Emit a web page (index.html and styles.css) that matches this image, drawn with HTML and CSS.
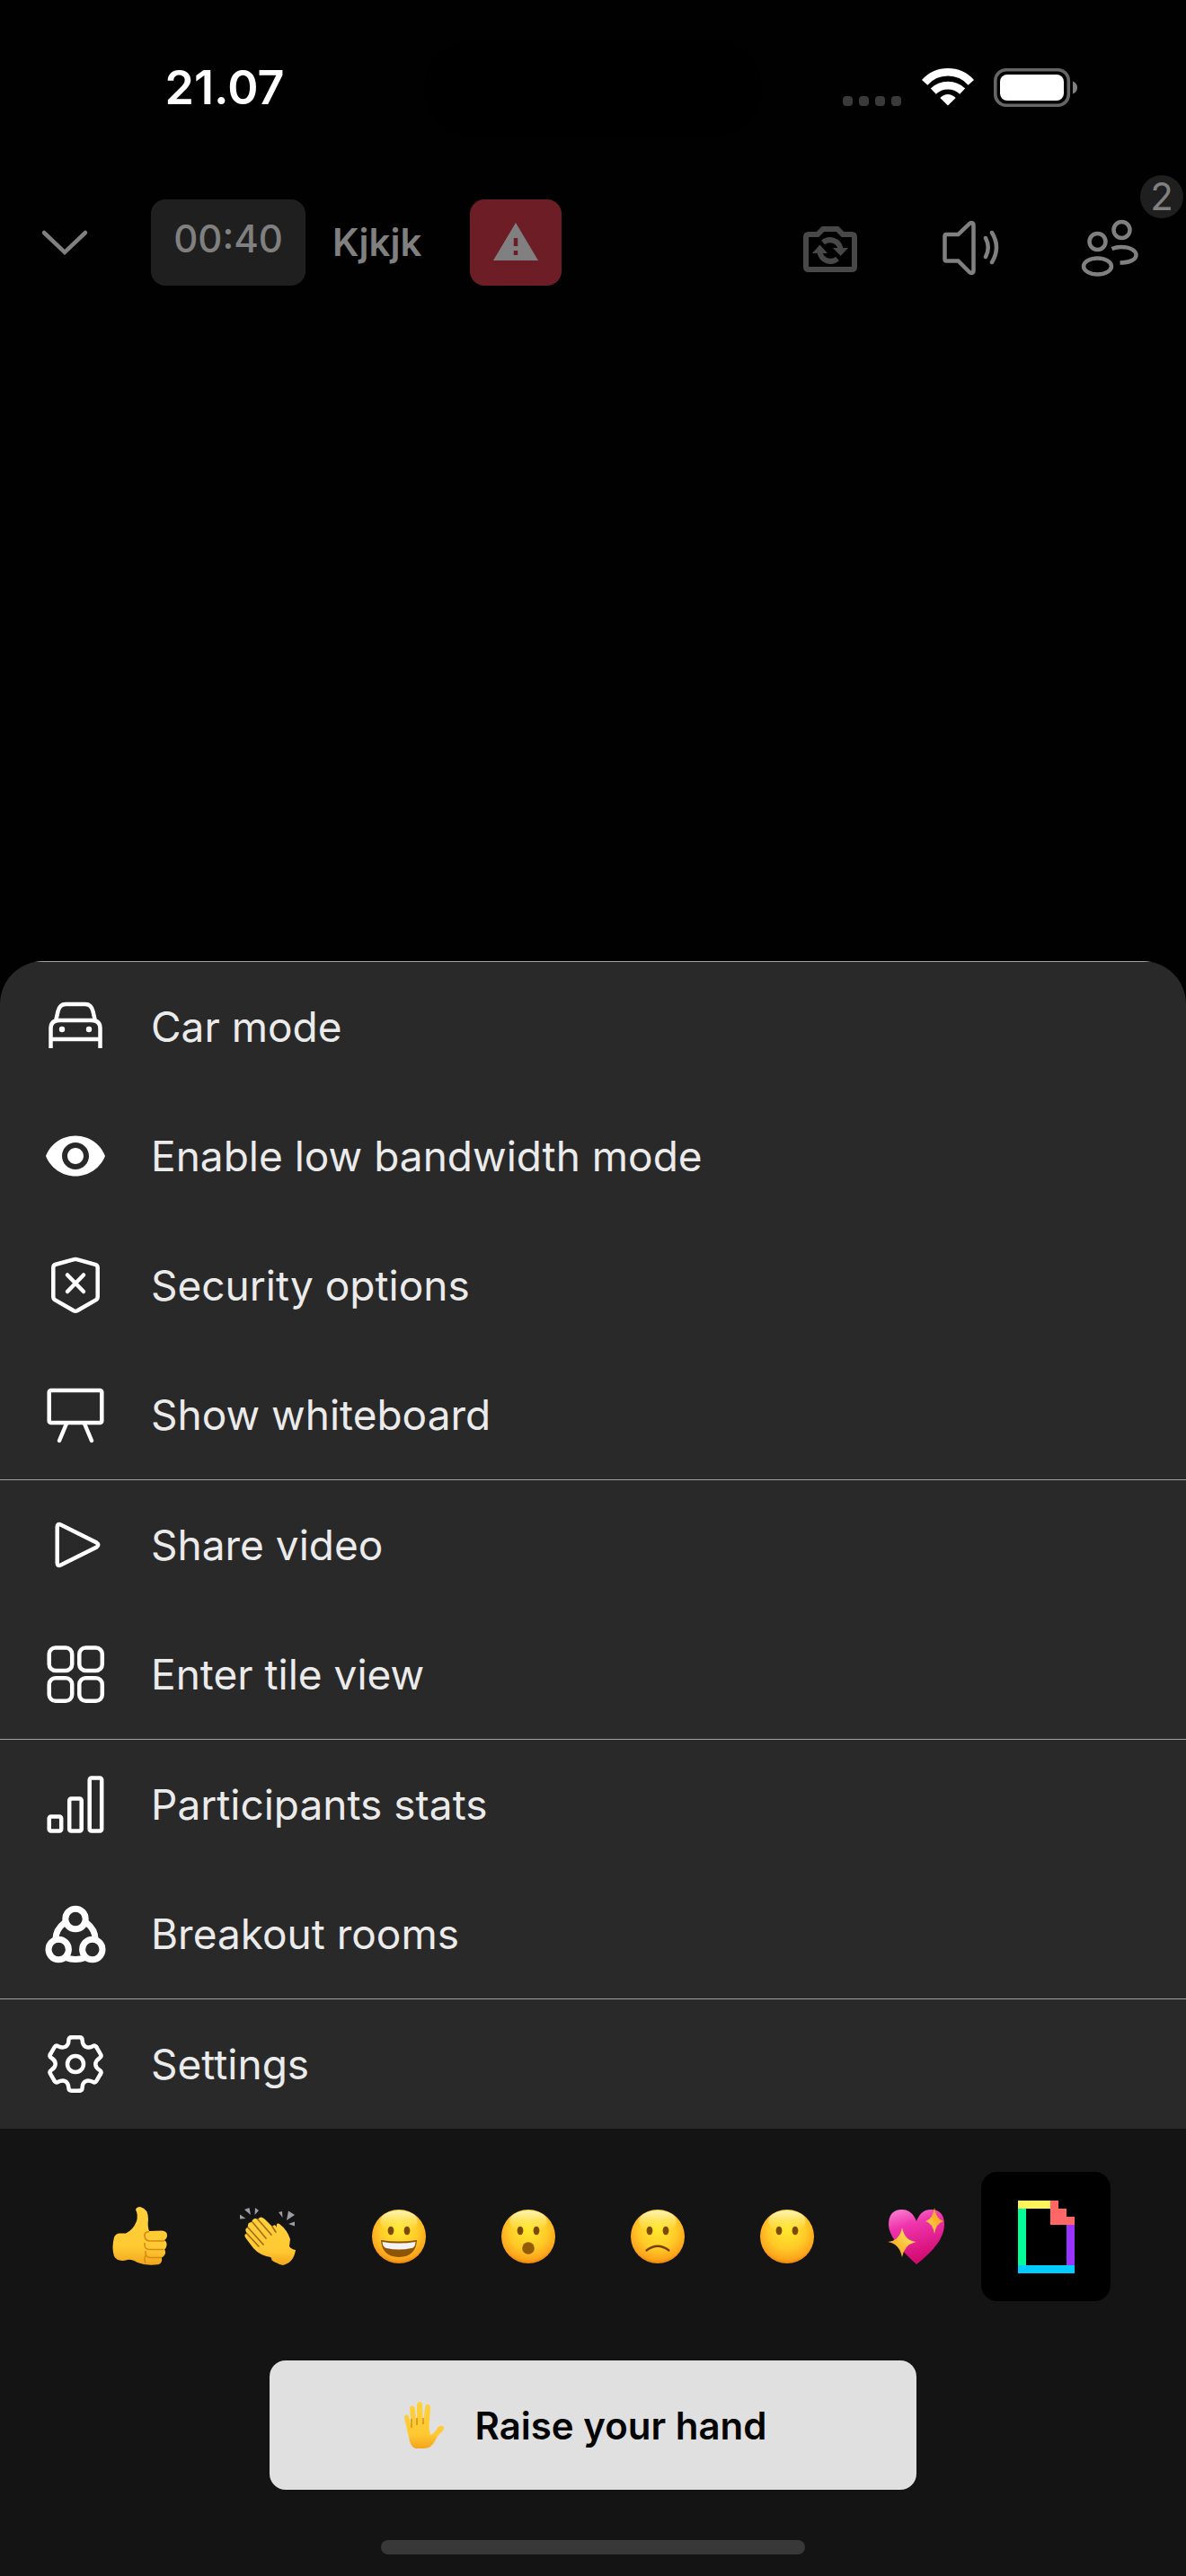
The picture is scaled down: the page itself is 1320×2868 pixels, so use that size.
FILE: index.html
```html
<!DOCTYPE html>
<html lang="en">
<head>
    <meta charset="UTF-8">
    <meta name="viewport" content="width=device-width, initial-scale=1.0">
    <title>Kjkjk</title>
    <link rel="stylesheet" href="styles.css">
</head>
<body>
    <!-- Status bar -->
    <div class="status-bar">
        <div class="status-time">21.07</div>
        <div class="island"></div>
        <div class="status-icons">
            <svg class="signal" width="66" height="42" viewBox="0 0 66 42" fill="#3a3a3a">
                <rect x="0" y="31" width="11" height="11" rx="4"/>
                <rect x="18" y="31" width="11" height="11" rx="4"/>
                <rect x="36" y="31" width="11" height="11" rx="4"/>
                <rect x="54" y="31" width="11" height="11" rx="4"/>
            </svg>
            <svg width="58" height="42" viewBox="0 0 58 42" fill="none" stroke="#fff" stroke-width="8.6">
                <path d="M3.2 15.8A34.7 34.7 0 0 1 54.8 15.8"/>
                <path d="M12.8 25.6A23.5 23.5 0 0 1 45.2 25.6"/>
                <path d="M20.3 33Q29 25 37.7 33L29 41.5Z" fill="#fff" stroke="none"/>
            </svg>
            <svg width="94" height="44" viewBox="0 0 94 44">
                <rect x="1.8" y="1.8" width="81.5" height="39.5" rx="12" fill="none" stroke="#666" stroke-width="3.6"/>
                <rect x="7" y="7" width="71" height="29" rx="8" fill="#fff"/>
                <path d="M88 14.5q5 2 5 7t-5 7Z" fill="#808080"/>
            </svg>
        </div>
    </div>

    <header class="call-header">
        <button class="icon-button" aria-label="Minimize">
            <svg class="icon" viewBox="0 0 72 72"><path d="M13 25 36 47 59 25" stroke-linecap="round"/></svg>
        </button>
        <div class="timer">00:40</div>
        <h1 class="room-name">Kjkjk</h1>
        <button class="alert" aria-label="Security warning">
            <svg class="icon" viewBox="0 0 72 72">
                <path d="M36 14 61 56H11Z" fill="#808080" stroke="none"/>
                <path d="M36 31V40M36 45V50" stroke="#6c1d25"/>
            </svg>
        </button>
        <div class="header-actions">
            <button class="icon-button dim" aria-label="Switch camera">
                <svg class="icon" viewBox="0 0 72 72">
                    <path d="M12 20H22L28 14H44L50 20H60Q63 20 63 23V56Q63 59 60 59H12Q9 59 9 56V23Q9 20 12 20Z" stroke-width="6"/>
                    <path d="M28 29A12 12 0 0 1 47.5 36M44 47A12 12 0 0 1 24.5 40" stroke-width="6"/>
                    <path d="M39 35H56L47.5 44ZM16 41H33L24.5 31.5Z" fill="currentColor" stroke="none"/>
                </svg>
            </button>
            <button class="icon-button" aria-label="Audio output">
                <svg class="icon" viewBox="0 0 72 72" stroke-linecap="round">
                    <path d="M9.5 20H22.5L35 8Q39.5 5.5 39.5 10V60Q39.5 64.5 35 62L22.5 49.5H9.5Q7.5 49.5 7.5 47.5V22Q7.5 20 9.5 20Z"/>
                    <path d="M53 24Q58.5 34.5 53 45M60 18Q70 34.5 60 51"/>
                </svg>
            </button>
            <button class="icon-button" aria-label="Participants">
                <svg class="icon" viewBox="0 0 72 72">
                    <circle cx="21.5" cy="28" r="9"/>
                    <circle cx="48.5" cy="15" r="9"/>
                    <ellipse cx="21.5" cy="55.5" rx="15.5" ry="9"/>
                    <path d="M37.5 36Q42 34 48 34C58 34 64.5 38 64.5 43S57 51.5 46.5 51.5"/>
                </svg>
                <span class="badge">2</span>
            </button>
        </div>
    </header>

    <!-- Overflow menu -->
    <main class="sheet">
        <div class="menu-group">
            <button class="menu-item">
                <svg class="icon" viewBox="0 0 72 72">
                    <path d="M14 30 16.5 19Q18.5 11 25 11H47Q53.5 11 55.5 19L58 30M8.5 60V38Q8.5 29 18 29H54Q63.5 29 63.5 38V60M8.5 50H63.5"/>
                    <circle cx="21" cy="39" r="3.2" fill="#fff" stroke="none"/>
                    <circle cx="51" cy="39" r="3.2" fill="#fff" stroke="none"/>
                </svg>
                Car mode
            </button>
            <button class="menu-item">
                <svg class="icon" viewBox="0 0 24 24">
                    <path d="M12 4.5C7 4.5 2.73 7.61 1 12c1.73 4.39 6 7.5 11 7.5s9.27-3.11 11-7.5c-1.73-4.39-6-7.5-11-7.5zM12 17c-2.76 0-5-2.24-5-5s2.24-5 5-5 5 2.24 5 5-2.24 5-5 5zm0-8c-1.66 0-3 1.34-3 3s1.34 3 3 3 3-1.34 3-3-1.34-3-3-3z" fill="#fff" stroke="none"/>
                </svg>
                Enable low bandwidth mode
            </button>
            <button class="menu-item">
                <svg class="icon" viewBox="0 0 72 72" stroke-linecap="round">
                    <path d="M34.5 7.2Q36 6.7 37.5 7.2L58 12.8Q60.7 13.5 60.7 16.5V49Q60.7 51 59 52.2L38 64.2Q36 65.2 34 64.2L13 52.2Q11.3 51 11.3 49V16.5Q11.3 13.5 14 12.8Z"/>
                    <path d="M27 24.5 45 43M45 24.5 27 43"/>
                </svg>
                Security options
            </button>
            <button class="menu-item">
                <svg class="icon" viewBox="0 0 72 72" stroke-linecap="round">
                    <rect x="6.7" y="9" width="58.6" height="36" rx="2"/>
                    <path d="M26 46 18 65M46 46 54 65"/>
                </svg>
                Show whiteboard
            </button>
        </div>
        <div class="menu-group">
            <button class="menu-item">
                <svg class="icon" viewBox="0 0 72 72">
                    <path d="M15.7 16Q15.7 12 19.5 13.5L59.5 33.5Q63 36 59.5 38.5L19.5 58.5Q15.7 60 15.7 56Z"/>
                </svg>
                Share video
            </button>
            <button class="menu-item">
                <svg class="icon" viewBox="0 0 72 72">
                    <rect x="6.7" y="6.5" width="25.5" height="25.5" rx="7"/>
                    <rect x="40.3" y="6.5" width="25.5" height="25.5" rx="7"/>
                    <rect x="6.7" y="40.3" width="25.5" height="25.5" rx="7"/>
                    <rect x="40.3" y="40.3" width="25.5" height="25.5" rx="7"/>
                </svg>
                Enter tile view
            </button>
        </div>
        <div class="menu-group">
            <button class="menu-item">
                <svg class="icon" viewBox="0 0 72 72">
                    <rect x="6.7" y="49.5" width="13.5" height="16" rx="2"/>
                    <rect x="29.2" y="29.5" width="13.5" height="36" rx="2"/>
                    <rect x="51.7" y="6.5" width="13.5" height="59" rx="2"/>
                </svg>
                Participants stats
            </button>
            <button class="menu-item">
                <svg class="icon icon-bold" viewBox="0 0 72 72">
                    <circle cx="36" cy="19.5" r="11.2"/>
                    <circle cx="17.2" cy="53.5" r="11.2"/>
                    <circle cx="54.8" cy="53.5" r="11.2"/>
                    <path d="M24 23.5Q14 31 13.7 43M48 23.5Q58 31 58.3 43M25 62.5Q36 66.5 47 62.5"/>
                </svg>
                Breakout rooms
            </button>
        </div>
        <div class="menu-group">
            <button class="menu-item">
                <svg class="icon" viewBox="-36 -36 72 72" stroke-linecap="round">
                    <defs>
                        <path id="tooth" d="M-4.5-29.7H4.5Q7.5-29.7 7.6-26.5C8-21.5 9.5-20.3 11.2-19.3C12.9-18.2 15-17.6 19.2-19.8Q22-21.5 23.5-18.7"/>
                    </defs>
                    <circle r="9"/>
                    <use href="#tooth"/>
                    <use href="#tooth" transform="rotate(60)"/>
                    <use href="#tooth" transform="rotate(120)"/>
                    <use href="#tooth" transform="rotate(180)"/>
                    <use href="#tooth" transform="rotate(240)"/>
                    <use href="#tooth" transform="rotate(300)"/>
                </svg>
                Settings
            </button>
        </div>
    </main>

    <footer class="reactions">
        <svg width="0" height="0" class="shared-defs">
            <defs>
                <radialGradient id="face" cx="50%" cy="38%" r="64%">
                    <stop offset="0" stop-color="#ffe92e"/>
                    <stop offset="0.55" stop-color="#ffca28"/>
                    <stop offset="0.85" stop-color="#fda51c"/>
                    <stop offset="1" stop-color="#e57d0c"/>
                </radialGradient>
                <linearGradient id="shine" x1="0" y1="0" x2="0" y2="1">
                    <stop offset="0" stop-color="#fffbd0" stop-opacity="0.9"/>
                    <stop offset="1" stop-color="#ffee50" stop-opacity="0"/>
                </linearGradient>
                <linearGradient id="skin" x1="0" y1="0" x2="0" y2="1">
                    <stop offset="0" stop-color="#ffd13b"/>
                    <stop offset="0.7" stop-color="#ffc933"/>
                    <stop offset="1" stop-color="#f2a51c"/>
                </linearGradient>
                <linearGradient id="heart" x1="0" y1="0" x2="0.3" y2="1">
                    <stop offset="0" stop-color="#fb86d5"/>
                    <stop offset="0.35" stop-color="#ef35ad"/>
                    <stop offset="1" stop-color="#d30a72"/>
                </linearGradient>
                <radialGradient id="spark">
                    <stop offset="0" stop-color="#ffed70"/>
                    <stop offset="1" stop-color="#f9ad25"/>
                </radialGradient>
                <g id="head">
                    <circle cx="33" cy="33" r="30" fill="url(#face)"/>
                    <ellipse cx="33" cy="16" rx="21" ry="12" fill="url(#shine)"/>
                    <ellipse cx="24" cy="26.5" rx="3.4" ry="4.8" fill="#7b4a03"/>
                    <ellipse cx="42" cy="26.5" rx="3.4" ry="4.8" fill="#7b4a03"/>
                </g>
            </defs>
        </svg>
        <div class="reaction-row">
            <button class="reaction" aria-label="Thumbs up">
                <svg class="emoji" viewBox="0 0 66 66">
                    <path d="M28 3Q29 0 33 0Q42 2 42 14Q41 22 43 27L57 26.5Q63 27 63 31.5Q63 35 60 37Q63 39 62.5 43Q62 46 60 47.5Q62 50 60.5 53Q59 56 57 56.5Q58 62 54 64Q40 66 30 62Q23 58 19 59Q8 62 4 55Q1 45 4 34Q6 29 11 29.5H17Q25 26 29 16Q31 9 28 3Z" fill="url(#skin)"/>
                    <path d="M38 30Q37 37 43 38H60M38 40Q37 47 43 47.5H59M39 49Q38 56 44 56.5H57M43 27.5Q38 28 37.5 32M39 54Q37 59 39 63" fill="none" stroke="#d88b13" stroke-width="1.6"/>
                </svg>
            </button>
            <button class="reaction" aria-label="Clap">
                <svg class="emoji" viewBox="0 0 66 66">
                    <path d="M5 3 12 9 10.5 1ZM0 8.5 6.5 13 0 13.5ZM17 1 21 4 16.5 9ZM43 6 47 5 47.5 12ZM54 4.5 61 9 52 15ZM54 19 61 16.5 61 21.5Z" fill="#9a9da3"/>
                    <path d="M35 59Q41 65 44 60L52 53 41 43Z" fill="#e9a31d"/>
                    <path d="M41 23Q40 17 44 19Q53 26 56 36L55 44Q57 47 62 48Q60 62 48 65Q40 64 34 56Q22 54 15 46L6 34Q4 30 8 30Q4 24 9 23Q8 17 13 17Q15 11 20 14Q23 9 28 14L36 22Q39 18 41 23Z" fill="url(#skin)"/>
                    <path d="M20 14 35 31M14 17 29 35M9 23 26 42M8 30 21 44M36 22 40 28" fill="none" stroke="#a96b10" stroke-width="1.7" stroke-linecap="round"/>
                </svg>
            </button>
            <button class="reaction" aria-label="Smile">
                <svg class="emoji" viewBox="0 0 66 66">
                    <use href="#head"/>
                    <path d="M13 37Q33 40 53 37Q52 55.5 33 56Q14 55.5 13 37Z" fill="#8d5505"/>
                    <path d="M14.5 39Q33 42 51.5 39Q51 46 47 46Q33 49 19 46Q15 45 14.5 39Z" fill="#f3f2f5"/>
                </svg>
            </button>
            <button class="reaction" aria-label="Surprised">
                <svg class="emoji" viewBox="0 0 66 66">
                    <use href="#head"/>
                    <circle cx="33" cy="46" r="6.8" fill="#945b05"/>
                </svg>
            </button>
            <button class="reaction" aria-label="Sad">
                <svg class="emoji" viewBox="0 0 66 66">
                    <use href="#head"/>
                    <path d="M20.5 48.5Q33 39 45.5 48.5" fill="none" stroke="#72420a" stroke-width="2.2" stroke-linecap="round"/>
                </svg>
            </button>
            <button class="reaction" aria-label="Silence">
                <svg class="emoji" viewBox="0 0 66 66"><use href="#head"/></svg>
            </button>
            <button class="reaction" aria-label="Love">
                <svg class="emoji" viewBox="0 0 66 66">
                    <path d="M33 64Q2 36 2 20Q2 3 17 3Q28 3 33 16Q38 3 49 3Q64 3 64 20Q64 40 33 64Z" fill="url(#heart)"/>
                    <path d="M17 23Q20 38 33 39Q20 41 17 56Q14 41 1 39Q14 38 17 23ZM53 1Q55 14 63 16Q55 18 53 30Q51 18 43 16Q51 14 53 1Z" fill="url(#spark)"/>
                </svg>
            </button>
            <button class="reaction giphy" aria-label="GIPHY">
                <svg width="63" height="81" viewBox="0 0 7 9" shape-rendering="crispEdges">
                    <path d="M0 0H4V1H0Z" fill="#fff35c"/>
                    <path d="M0 1H1V8H0Z" fill="#00ff99"/>
                    <path d="M0 8H7V9H0Z" fill="#00ccff"/>
                    <path d="M6 3H7V8H6Z" fill="#9933ff"/>
                    <path d="M4 0H5V1H6V2H7V3H4Z" fill="#ff6666"/>
                </svg>
            </button>
        </div>
        <button class="raise-hand">
            <svg width="44" height="52" viewBox="0 0 44 52">
                <path d="M6 44 0 18Q0 14 3 14.5Q5 15 6 20L8 29 6 7Q6 4 9 4.5Q12 5 12 9L14 26V3Q14.5 0 17 0Q20 0 20 4L21 26 23 6Q24 2 26.5 3Q29 3 29 7L27.5 29 29 37Q34 35 37 29Q40 26 43 27Q45 29 43 32Q38 36 35 42Q31 52 21 52H13Q8 51 6 44Z" fill="url(#skin)"/>
                <path d="M8 19V29M14 18V26M21 18V25" fill="none" stroke="#d98c12" stroke-width="1.5"/>
            </svg>
            Raise your hand
        </button>
        <div class="home-indicator"></div>
    </footer>
</body>
</html>
```

FILE: styles.css
```css
:root {
    --bg: #010101;
    --sheet: #292929;
    --footer: #141414;
    --muted: #808080;
    --text: #ebebeb;
}

* {
    box-sizing: border-box;
    margin: 0;
    padding: 0;
}

body {
    font-family: Inter, 'Liberation Sans', sans-serif;
    background-color: var(--bg);
    color: var(--text);
    min-height: 100vh;
    display: flex;
    flex-direction: column;
}

button {
    font: inherit;
    color: inherit;
    background: none;
    border: none;
    cursor: pointer;
}

svg {
    display: block;
    flex-shrink: 0;
}

.icon {
    width: 72px;
    height: 72px;
    fill: none;
    stroke: currentColor;
    stroke-width: 4.5;
}

.icon-bold {
    stroke-width: 7;
}

/* status bar */
.status-bar {
    display: grid;
    grid-template-columns: 1fr 376px 1fr;
    align-items: center;
    padding-top: 44px;
}

.status-time {
    color: white;
    font-size: 52px;
    font-weight: 600;
    line-height: 60px;
    text-align: center;
    padding-left: 28px;
}

.island {
    height: 108px;
    border-radius: 54px;
    background: #000;
}

.status-icons {
    display: flex;
    justify-content: flex-end;
    gap: 22px;
    padding-right: 120px;
}

/* call header */
.call-header {
    display: flex;
    align-items: center;
    height: 96px;
    margin-top: 70px;
    padding: 0 48px 0 36px;
    color: var(--muted);
}

.icon-button {
    position: relative;
}

.timer {
    width: 172px;
    height: 96px;
    margin-left: 60px;
    padding-bottom: 8px;
    border-radius: 16px;
    background: #1f1f1f;
    font-size: 42px;
    font-weight: 500;
    line-height: 88px;
    text-align: center;
}

.room-name {
    width: 183px;
    padding-left: 30px;
    font-size: 42px;
    font-weight: 600;
    line-height: 96px;
}

.alert {
    display: flex;
    align-items: center;
    justify-content: center;
    width: 102px;
    height: 96px;
    border-radius: 16px;
    background: #6c1d25;
}

.header-actions {
    display: flex;
    gap: 84px;
    margin-left: auto;
    padding-top: 14px;
}

.dim {
    color: #484848;
}

.badge {
    position: absolute;
    top: -46px;
    right: -45px;
    width: 48px;
    height: 48px;
    border-radius: 50%;
    background: #1f1f1f;
    font-size: 42px;
    line-height: 48px;
    text-align: center;
}

/* menu sheet */
.sheet {
    margin-top: auto;
    border-radius: 48px 48px 0 0;
    background: var(--sheet);
    overflow: hidden;
}

.menu-group {
    border-top: 1px solid #a0a0a0;
}

.menu-item {
    display: flex;
    align-items: center;
    gap: 48px;
    width: 100%;
    height: 144px;
    padding: 0 48px;
    font-size: 46px;
    line-height: 60px;
    text-align: left;
}

.menu-item .icon {
    color: white;
}

/* reactions */
.reactions {
    background: var(--footer);
    padding: 48px 84px 24px;
}

.shared-defs {
    position: absolute;
}

.reaction-row {
    display: flex;
    justify-content: center;
}

.reaction {
    display: flex;
    align-items: center;
    justify-content: center;
    width: 144px;
    height: 144px;
    border-radius: 18px;
}

.emoji {
    width: 66px;
    height: 66px;
}

.giphy {
    background: #000;
}

.raise-hand {
    display: flex;
    align-items: center;
    justify-content: center;
    gap: 34px;
    width: 100%;
    max-width: 720px;
    height: 144px;
    margin: 66px auto 56px;
    padding-right: 16px;
    border-radius: 18px;
    background: #e0e0e0;
    color: #040404;
    font-size: 42px;
    font-weight: 600;
}

.home-indicator {
    width: 472px;
    max-width: 100%;
    height: 16px;
    margin: 0 auto;
    border-radius: 8px;
    background: #383838;
}
```
